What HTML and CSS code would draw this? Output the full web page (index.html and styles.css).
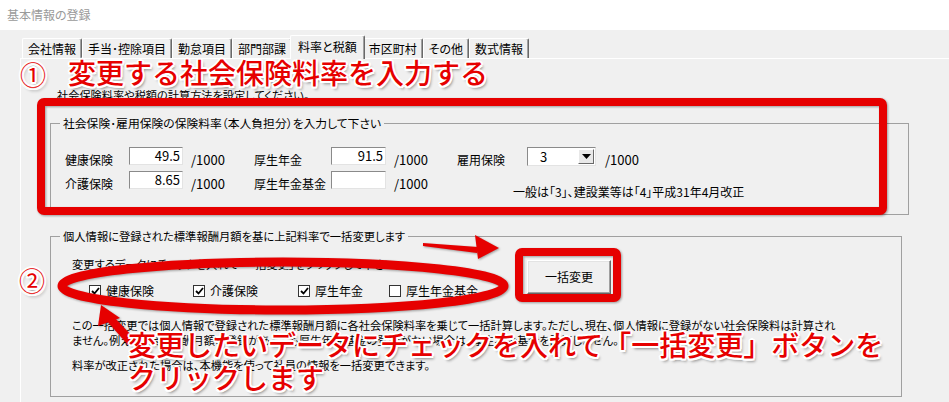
FILE: index.html
```html
<!DOCTYPE html>
<html lang="ja">
<head>
<meta charset="utf-8">
<title>基本情報の登録</title>
<link rel="stylesheet" href="styles.css">
</head>
<body>
<header class="titlebar">基本情報の登録</header>
<main class="dialog">
  <nav class="tabs">
    <span class="tab">会社情報</span>
    <span class="tab">手当･控除項目</span>
    <span class="tab">勤怠項目</span>
    <span class="tab">部門部課</span>
    <span class="tab is-active">料率と税額</span>
    <span class="tab">市区町村</span>
    <span class="tab">その他</span>
    <span class="tab">数式情報</span>
  </nav>
  <section class="panel">
    <p class="intro">社会保険料率や税額の計算方法を設定してください。</p>
    <fieldset class="group group-rates">
      <legend>社会保険･雇用保険の保険料率（本人負担分）を入力して下さい</legend>
      <div class="rate-grid">
        <span class="lbl">健康保険</span><span class="field">49.5</span><span class="unit">/1000</span>
        <span class="lbl">厚生年金</span><span class="field">91.5</span><span class="unit">/1000</span>
        <span class="lbl">雇用保険</span>
        <span class="combo"><span class="combo-val">3</span><span class="combo-btn"><svg width="9" height="5" viewBox="0 0 9 5"><path d="M0 0h9L4.5 5z" fill="#000"/></svg></span></span>
        <span class="unit unit-last">/1000</span>
        <span class="lbl">介護保険</span><span class="field">8.65</span><span class="unit">/1000</span>
        <span class="lbl">厚生年金基金</span><span class="field"></span><span class="unit">/1000</span>
        <span class="note">一般は「3」、建設業等は「4」平成31年4月改正</span>
      </div>
    </fieldset>
    <fieldset class="group group-bulk">
      <legend>個人情報に登録された標準報酬月額を基に上記料率で一括変更します</legend>
      <div class="bulk">
        <div class="bulk-top">
          <div class="bulk-left">
            <p class="small">変更するデータにチェックを入れて「一括変更」をクリックして下さい。</p>
            <div class="checks">
              <span class="check"><span class="cb"><svg width="9" height="8" viewBox="0 0 9 8"><path d="M1 4l2.5 2.5L8 1" fill="none" stroke="#000" stroke-width="1.8"/></svg></span>健康保険</span>
              <span class="check"><span class="cb"><svg width="9" height="8" viewBox="0 0 9 8"><path d="M1 4l2.5 2.5L8 1" fill="none" stroke="#000" stroke-width="1.8"/></svg></span>介護保険</span>
              <span class="check"><span class="cb"><svg width="9" height="8" viewBox="0 0 9 8"><path d="M1 4l2.5 2.5L8 1" fill="none" stroke="#000" stroke-width="1.8"/></svg></span>厚生年金</span>
              <span class="check"><span class="cb"></span>厚生年金基金</span>
            </div>
          </div>
          <span class="btn">一括変更</span>
        </div>
        <p class="small para">この一括変更では個人情報で登録された標準報酬月額に各社会保険料率を乗じて一括計算します。ただし、現在、個人情報に登録がない社会保険料は計算され<br>ません。例えば、標準報酬月額の登録があっても厚生年金基金の登録がない場合は、厚生年金基金を計算しません。</p>
        <p class="small para2">料率が改正された場合は、本機能を使って社員の情報を一括変更できます。</p>
      </div>
    </fieldset>
  </section>
</main>

<svg class="marks" width="949" height="402" viewBox="0 0 949 402" aria-hidden="true">
  <g fill="none" stroke="#e60000" stroke-width="8" stroke-linejoin="round">
    <rect x="41" y="102" width="842" height="109" rx="3"/>
    <rect x="519" y="252" width="98" height="46" rx="3"/>
  </g>
  <ellipse cx="283" cy="286" rx="221" ry="24" fill="none" stroke="#e60000" stroke-width="9"/>
  <g fill="#e60000">
    <path d="M423 243 L478 247 L477 253 L423 246 Z"/>
    <path d="M475 235 L499 248 L478 259 Z"/>
    <path d="M101 305 L120 318 L98 326 Z"/>
    <path d="M106 320 L113 316 L136 340 L128 345 Z"/>
  </g>
</svg>

<div class="ann ann-num ann-num1">①</div>
<div class="ann ann-num ann-num2">②</div>
<div class="ann ann-1">変更する社会保険料率を入力する</div>
<div class="ann ann-2">変更したいデータにチェックを入れて「一括変更」ボタンを<br>クリックします</div>
</body>
</html>
```

FILE: styles.css
```css
* { box-sizing: border-box; }
html, body { margin: 0; padding: 0; }
body {
  width: 949px;
  height: 402px;
  overflow: hidden;
  position: relative;
  background: #f0f0f0;
  color: #000;
  font-family: "Noto Sans CJK JP", "Noto Sans", sans-serif;
  font-size: 12px;
  line-height: 16px;
  font-feature-settings: "palt";
}

.titlebar {
  height: 30px;
  background: #fff;
  color: #9a9a9a;
  padding-left: 7px;
  line-height: 30px;
  font-size: 12px;
}

.dialog { padding: 5px 0 0 20px; }

.tabs {
  display: flex;
  align-items: flex-end;
  height: 23px;
  padding-left: 2px;
}
.tab {
  flex: none;
  height: 20px;
  line-height: 19px;
  padding: 0 5px;
  border-top: 1px solid #fff;
  border-left: 1px solid #fff;
  border-right: 1px solid #696969;
  box-shadow: inset -1px 0 #a0a0a0;
  border-radius: 2px 2px 0 0;
  white-space: nowrap;
  background: #f0f0f0;
}
.tab.is-active {
  height: 24px;
  line-height: 21px;
  margin: 0 -2px -1px;
  padding: 0 7px;
  position: relative;
  z-index: 1;
}

.panel {
  border-top: 1px solid #fff;
  border-left: 1px solid #fff;
  margin-right: -40px;
  padding: 28px 0 20px 29px;
}

.intro {
  margin: 0 0 0 7px;
  font-size: 11.2px;
  line-height: 16px;
}

.group {
  margin: 0;
  padding: 0;
  border: 1px solid #a0a0a0;
  min-inline-size: 0;
}
.group legend {
  margin-left: 9px;
  padding: 0 3px;
  line-height: 16px;
  font-size: 12px;
}
.group-rates { width: 859px; margin-top: 12px; }
.group-rates legend { font-size: 11.8px; }
.group-bulk { width: 852px; margin-top: 13px; }
.group-bulk legend { font-size: 11.3px; }

.rate-grid {
  display: grid;
  grid-template-columns: 64px 54px 71px 77px 55px 71px 70px 69px 1fr;
  row-gap: 3px;
  align-items: start;
  padding: 16px 0 14px 14px;
}
.lbl { margin-top: 5px; white-space: nowrap; }
.unit { margin-top: 5px; padding-left: 8px; font-size: 13px; }
.unit-last { padding-left: 9px; }
.field {
  height: 18px;
  background: #fff;
  border: 1px solid;
  border-color: #8a8a8a #e3e3e3 #e3e3e3 #8a8a8a;
  text-align: right;
  padding-right: 2px;
  font-size: 13px;
  line-height: 16px;
}
.combo {
  height: 19px;
  display: flex;
  align-items: center;
  background: #fff;
  border: 1px solid;
  border-color: #8a8a8a #e3e3e3 #e3e3e3 #8a8a8a;
}
.combo-val { flex: 1; padding-left: 12px; font-size: 13px; line-height: 16px; }
.combo-btn {
  width: 16px;
  height: 15px;
  margin-right: 1px;
  display: grid;
  place-items: center;
  background: #e8e8e8;
  border: 1px solid;
  border-color: #fff #696969 #696969 #fff;
}
.combo-btn svg { display: block; }
.note {
  grid-column: 8 / -1;
  margin: 13px 0 0 -14px;
  white-space: nowrap;
}

.bulk { padding: 12px 0 23px 21px; }
.bulk-top {
  display: grid;
  grid-template-columns: 455px auto;
  align-items: start;
}
.small { margin: 0; font-size: 11.25px; line-height: 16px; white-space: nowrap; }
.checks {
  display: grid;
  grid-template-columns: 104px 105px 91px auto;
  margin: 11px 0 0 17px;
}
.check { display: flex; align-items: center; gap: 5px; font-size: 12px; line-height: 16px; white-space: nowrap; }
.cb {
  width: 12px;
  height: 12px;
  background: #fff;
  border: 1px solid #333;
  display: grid;
  place-items: center;
}
.cb svg { display: block; }
.btn {
  width: 84px;
  height: 34px;
  margin-top: 4px;
  display: grid;
  place-items: center;
  background: #f0f0f0;
  border: 1px solid;
  border-color: #fff #696969 #696969 #fff;
  box-shadow: inset -1px -1px #a0a0a0, inset 1px 1px #e3e3e3;
  font-size: 12px;
}
.para { margin-top: 19px; line-height: 15px; }
.para2 { margin-top: 10px; line-height: 15px; }

.marks {
  position: absolute;
  left: 0;
  top: 0;
  pointer-events: none;
  filter: drop-shadow(1px 1px 1px rgba(0, 0, 0, 0.35));
}

.ann {
  position: absolute;
  color: #e60000;
  font-weight: 500;
  font-size: 28px;
  line-height: 28px;
  white-space: nowrap;
  font-feature-settings: normal;
  text-shadow:
    2px 0 #fff, -2px 0 #fff, 0 2px #fff, 0 -2px #fff,
    1.5px 1.5px #fff, -1.5px -1.5px #fff, 1.5px -1.5px #fff, -1.5px 1.5px #fff,
    2px 3px 3px rgba(0, 0, 0, 0.45);
}
.ann-1 { left: 68px; top: 58px; }
.ann-2 { left: 128px; top: 328px; line-height: 33px; }
.ann-num {
  font-size: 26px;
  font-weight: 400;
}
.ann-num1 { left: 20px; top: 60px; }
.ann-num2 { left: 19px; top: 266px; }
```
